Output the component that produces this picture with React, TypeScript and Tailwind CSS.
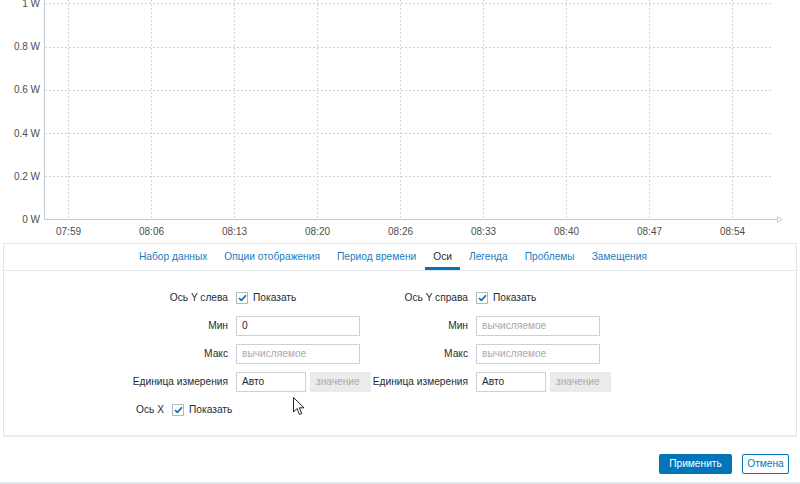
import React from "react";

const FONT = { fontFamily: '"Liberation Sans", Arial, sans-serif' };

const gridY = [3.3, 46.5, 89.7, 132.9, 176.1];
const yLabels = ["1 W", "0.8 W", "0.6 W", "0.4 W", "0.2 W", "0 W"];
const times = ["07:59", "08:06", "08:13", "08:20", "08:26", "08:33", "08:40", "08:47", "08:54"];

function Chart() {
  const axisY = 219.5;
  return (
    <svg width="800" height="243" className="block" style={FONT}>
      {/* horizontal grid */}
      {gridY.map((y) => (
        <line
          key={y}
          x1={45}
          x2={772}
          y1={Math.round(y) + 0.5}
          y2={Math.round(y) + 0.5}
          stroke="#cdd6da"
          strokeDasharray="2 2"
        />
      ))}
      {/* vertical grid */}
      {times.map((_, i) => {
        const x = Math.round(68 + i * 83) + 0.5;
        return <line key={i} x1={x} x2={x} y1={0} y2={axisY} stroke="#cdd6da" strokeDasharray="2 2" />;
      })}
      {/* axes */}
      <line x1={44.5} x2={44.5} y1={0} y2={axisY} stroke="#bfcbd1" />
      <line x1={44} x2={777} y1={axisY} y2={axisY} stroke="#bfcbd1" />
      <path d="M777.5 216.5 L782 219.5 L777.5 222.5 Z" fill="#fff" stroke="#bfcbd1" />
      {/* labels */}
      {yLabels.map((t, i) => {
        const y = i < 5 ? gridY[i] : 219;
        return (
          <text key={t} x={40} y={y + 3.6} textAnchor="end" fontSize="10" fill="#4d4d4d">
            {t}
          </text>
        );
      })}
      {times.map((t, i) => (
        <text key={t} x={68 + i * 83 + 0.5} y={234.5} textAnchor="middle" fontSize="10" fill="#4d4d4d">
          {t}
        </text>
      ))}
    </svg>
  );
}

const tabs = ["Набор данных", "Опции отображения", "Период времени", "Оси", "Легенда", "Проблемы", "Замещения"];

function Check() {
  return (
    <span className="flex h-5 items-center gap-[5px]">
      <span className="flex h-3 w-3 items-center justify-center border border-[#acbbc2] bg-white">
        <svg width="9" height="8" viewBox="0 0 9 8">
          <path d="M1 4.2 L3.4 6.4 L8 1.3" fill="none" stroke="#0275b8" strokeWidth="1.7" />
        </svg>
      </span>
      <span className="text-[#1f2c33]">Показать</span>
    </span>
  );
}

function Input({ value, placeholder, w }: { value?: string; placeholder?: string; w: string }) {
  return (
    <span className={`flex h-5 items-center border border-[#c9d2d6] bg-white px-[5px] ${w}`}>
      {value ? (
        <span className="text-[#1f2c33]">{value}</span>
      ) : (
        <span className="text-[#a9a9a9]">{placeholder}</span>
      )}
    </span>
  );
}

function UnitRow() {
  return (
    <span className="flex h-5 items-center gap-1">
      <Input value="Авто" w="w-[70px]" />
      <span className="flex h-5 w-[61px] items-center border border-[#ebebeb] bg-[#ebebeb] px-[5px] text-[#a9a9a9]">
        значение
      </span>
    </span>
  );
}

function AxisColumn({ title, minValue }: { title: string; minValue?: string }) {
  return (
    <div className="grid grid-cols-[97px_135px] gap-x-2 gap-y-2">
      <span className="text-right leading-5 whitespace-nowrap">{title}</span>
      <Check />
      <span className="text-right leading-5">Мин</span>
      <Input value={minValue} placeholder="вычисляемое" w="w-[124px]" />
      <span className="text-right leading-5">Макс</span>
      <Input placeholder="вычисляемое" w="w-[124px]" />
      <span className="text-right leading-5 whitespace-nowrap">Единица измерения</span>
      <UnitRow />
    </div>
  );
}

export default function App() {
  return (
    <div className="relative flex h-[484px] w-[800px] flex-col overflow-hidden bg-white text-[10.2px] text-[#1f2c33]" style={FONT}>
      <Chart />

      <div className="mx-[3px] h-[193px] border border-[#e3e7ea] shadow-[0_1px_0_#eef0f1]">
        <div className="flex h-[27px] items-stretch gap-[1px] border-b border-[#e3e7ea] pl-[127px]">
          {tabs.map((t) => {
            const active = t === "Оси";
            return (
              <span
                key={t}
                className={`flex items-center whitespace-nowrap px-2 ${
                  active ? "border-b-[3px] border-[#0275b8] pt-[3px] text-[#1f2c33]" : "text-[#1b7cc0]"
                }`}
              >
                {t}
              </span>
            );
          })}
        </div>

        <div className="flex pl-[127px] pt-[17px]">
          <AxisColumn title="Ось Y слева" minValue="0" />
          <AxisColumn title="Ось Y справа" />
        </div>
        <div className="mt-2 flex gap-2 pl-[100px]">
          <span className="w-[60px] text-right leading-5">Ось X</span>
          <Check />
        </div>
      </div>

      <div className="mt-[18px] flex justify-end gap-[10px] pr-[11px]">
        <button className="h-5 w-[73px] rounded-[2px] bg-[#0275b8] text-white">Применить</button>
        <button className="h-5 w-[47px] rounded-[2px] border border-[#0275b8] bg-white text-[#0275b8]">Отмена</button>
      </div>

      <div className="mt-auto h-[2px] bg-[#e2e6e8]" />

      {/* mouse pointer */}
      <svg className="absolute left-[293px] top-[397px]" width="13" height="19" viewBox="0 0 13 19">
        <path
          d="M0.5 0.5 L0.5 15 L4 11.5 L6.5 17.5 L8.8 16.5 L6.3 10.8 L11 10.8 Z"
          fill="#fff"
          stroke="#222"
          strokeWidth="1"
          strokeLinejoin="round"
        />
      </svg>
    </div>
  );
}
